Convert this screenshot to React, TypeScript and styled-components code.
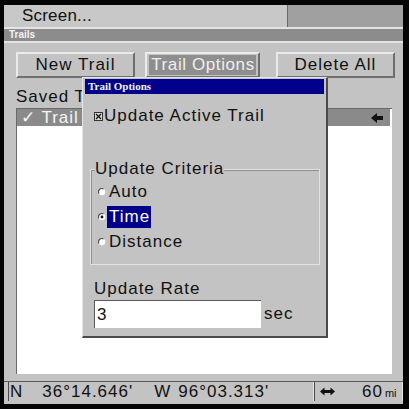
import styled, { createGlobalStyle } from "styled-components"

const Global = createGlobalStyle`
  body {
    margin: 0;
    background: #ffffff;
    font-family: "Liberation Sans", Arial, sans-serif;
  }
`

const Frame = styled.div`
  position: relative;
  width: 409px;
  height: 409px;
  box-sizing: border-box;
  border-style: solid;
  border-color: #050505;
  border-width: 5px 6px 5px 4px;
  background: #c3c3c3;
  display: flex;
  flex-direction: column;
  overflow: hidden;
  font-size: 17px;
  letter-spacing: 1px;
  color: #111;
  white-space: nowrap;
`

const MenuBar = styled.div`
  display: flex;
  height: 22px;
  flex-shrink: 0;
`

const MenuCell = styled.div<{ $dim?: boolean }>`
  flex: ${(p) => (p.$dim ? "1" : "0 0 265px")};
  background: ${(p) => (p.$dim ? "#a0a0a0" : "#c8c8c8")};
  border-left: ${(p) => (p.$dim ? "1px solid #6a6a6a" : "none")};
  line-height: 22px;
  letter-spacing: 0.2px;
  padding-left: ${(p) => (p.$dim ? "0" : "18px")};
`

const Rule = styled.div`
  height: 2px;
  background: #e4e4e4;
  flex-shrink: 0;
`

const TitleBar = styled.div<{ $blue?: boolean }>`
  height: ${(p) => (p.$blue ? "15px" : "12px")};
  flex-shrink: 0;
  background: ${(p) => (p.$blue ? "#00008a" : "#8c8c8c")};
  color: #f4f4f4;
  font-family: ${(p) =>
    p.$blue ? '"Liberation Serif", "Times New Roman", serif' : '"Liberation Sans", Arial, sans-serif'};
  font-weight: bold;
  font-size: ${(p) => (p.$blue ? "11px" : "10px")};
  letter-spacing: 0;
  line-height: ${(p) => (p.$blue ? "15px" : "12px")};
  padding-left: ${(p) => (p.$blue ? "3px" : "5px")};
`

const Panel = styled.div`
  flex: 1;
  display: flex;
  flex-direction: column;
  padding: 9px 7px 0 12px;
  min-height: 0;
`

const ButtonRow = styled.div`
  display: flex;
  height: 26px;
  flex-shrink: 0;
`

const Button = styled.div<{ $w: number; $gap: number }>`
  width: ${(p) => p.$w}px;
  margin-right: ${(p) => p.$gap}px;
  box-sizing: border-box;
  border-top: 2px solid #eaeaea;
  border-left: 2px solid #eaeaea;
  border-right: 2px solid #6e6e6e;
  border-bottom: 2px solid #6e6e6e;
  display: flex;
  align-items: center;
  justify-content: center;
`

const Focus = styled.span`
  background: #8e8e8e;
  color: #efefef;
  padding: 0 1px 0 2px;
  line-height: 20px;
  letter-spacing: 0.6px;
`

const Label = styled.div`
  line-height: 22px;
  margin-top: 8px;
`

const ListBox = styled.div`
  height: 266px;
  flex-shrink: 0;
  margin-right: 4px;
  background: #ffffff;
  border-left: 1px solid #6a6a6a;
  border-top: 1px solid #6a6a6a;
  box-sizing: border-box;
`

const ListRow = styled.div`
  height: 17px;
  margin-right: 2px;
  background: #8a8a8a;
  color: #f6f6f6;
  line-height: 17px;
  display: flex;
  align-items: center;
  justify-content: space-between;
  padding: 0 7px 0 4px;
`

const StatusBar = styled.div`
  margin: 7px -7px 0 -12px;
  height: 20px;
  flex-shrink: 0;
  border-top: 1px solid #5a5a5a;
  display: flex;
  box-sizing: border-box;
  padding-left: 4px;
`

const StatusCell = styled.div<{ $w?: number }>`
  ${(p) => (p.$w ? `flex: 0 0 ${p.$w}px;` : "flex: 1;")}
  border-left: 1px solid #4a4a4a;
  border-right: 1px solid #e8e8e8;
  display: flex;
  align-items: center;
  line-height: 19px;
`

const Pos = styled.span<{ $x: number }>`
  margin-left: ${(p) => p.$x}px;
  display: flex;
  align-items: center;
`

const Small = styled.span`
  font-size: 11px;
  letter-spacing: 0;
  margin: 3px 0 0 2px;
`

const Dialog = styled.div`
  position: absolute;
  left: 78px;
  top: 72px;
  width: 246px;
  height: 261px;
  box-sizing: border-box;
  background: #c3c3c3;
  border-top: 1px solid #e6e6e6;
  border-left: 1px solid #e6e6e6;
  border-right: 2px solid #4a4a4a;
  border-bottom: 2px solid #4a4a4a;
  padding: 1px 2px 0 2px;
  display: flex;
  flex-direction: column;
`

const DialogBody = styled.div`
  padding: 0 0 0 9px;
  display: flex;
  flex-direction: column;
`

const CheckRow = styled.div`
  display: flex;
  align-items: center;
  gap: 1px;
  margin-top: 12px;
`

const Group = styled.fieldset`
  margin: 33px 4px 0 -4px;
  padding: 0 0 6px 0;
  height: 106px;
  box-sizing: border-box;
  border: 1px solid #e2e2e2;
  box-shadow: inset 1px 1px 0 #8e8e8e;
  display: flex;
  flex-direction: column;
`

const Legend = styled.legend`
  padding: 0;
  margin-left: 4px;
  line-height: 20px;
  background: #c3c3c3;
`

const Radio = styled.div`
  display: flex;
  align-items: center;
  height: 25px;
  padding-left: 7px;
`

const Picked = styled.span<{ $on?: boolean }>`
  background: ${(p) => (p.$on ? "#00008a" : "transparent")};
  color: ${(p) => (p.$on ? "#ffffff" : "#111")};
  padding: 1px 1px 1px 2px;
  margin-left: 1px;
`

const RateLabel = styled.div`
  margin-top: 14px;
`

const InputRow = styled.div`
  display: flex;
  align-items: center;
  gap: 3px;
  margin-top: 1px;
`

const Input = styled.div`
  width: 167px;
  height: 28px;
  box-sizing: border-box;
  background: #ffffff;
  border-left: 1px solid #5a5a5a;
  border-top: 1px solid #5a5a5a;
  padding-left: 2px;
  line-height: 27px;
`

function CheckBox() {
  return (
    <svg width="9" height="9" viewBox="0 0 9 9">
      <rect x="0.5" y="0.5" width="8" height="8" fill="#d8d8d8" stroke="#333" />
      <path d="M2 2 L7 7 M7 2 L2 7" stroke="#111" strokeWidth="1.3" />
    </svg>
  )
}

function RadioDot({ on }: { on?: boolean }) {
  return (
    <svg width="8" height="8" viewBox="0 0 8 8">
      <circle cx="4" cy="4" r="3.3" fill="#ffffff" />
      <path d="M1 5.5 A3.3 3.3 0 0 1 5.5 1" stroke="#555" strokeWidth="1.2" fill="none" />
      {on && <circle cx="4" cy="4" r="1.4" fill="#111" />}
    </svg>
  )
}

function Arrow() {
  return (
    <svg width="12" height="10" viewBox="0 0 12 10">
      <path d="M0 5 L6 0 L6 3 L12 3 L12 7 L6 7 L6 10 Z" fill="#111" />
    </svg>
  )
}

function BothWays() {
  return (
    <svg width="15" height="9" viewBox="0 0 15 9">
      <path d="M0 4.5 L4.5 0.5 L4.5 3 L10.5 3 L10.5 0.5 L15 4.5 L10.5 8.5 L10.5 6 L4.5 6 L4.5 8.5 Z" fill="#111" />
    </svg>
  )
}

export default function App() {
  return (
    <>
      <Global />
      <Frame>
        <MenuBar>
          <MenuCell>Screen...</MenuCell>
          <MenuCell $dim />
        </MenuBar>
        <Rule />
        <TitleBar>Trails</TitleBar>
        <Rule />
        <Panel>
          <ButtonRow>
            <Button $w={119} $gap={10}>New Trail</Button>
            <Button $w={115} $gap={16}>
              <Focus>Trail Options</Focus>
            </Button>
            <Button $w={119} $gap={0}>Delete All</Button>
          </ButtonRow>
          <Label>Saved Trails</Label>
          <ListBox>
            <ListRow>
              <span>✓ Trail 1</span>
              <Arrow />
            </ListRow>
          </ListBox>
          <StatusBar>
            <StatusCell $w={304}>
              <Pos $x={1}>N</Pos>
              <Pos $x={19}>36°14.646'</Pos>
              <Pos $x={21}>W</Pos>
              <Pos $x={7}>96°03.313'</Pos>
            </StatusCell>
            <StatusCell>
              <Pos $x={5}>
                <BothWays />
              </Pos>
              <Pos $x={27}>60</Pos>
              <Small>mi</Small>
            </StatusCell>
          </StatusBar>
        </Panel>
        <Dialog>
          <TitleBar $blue>Trail Options</TitleBar>
          <DialogBody>
            <CheckRow>
              <CheckBox />
              <span>Update Active Trail</span>
            </CheckRow>
            <Group>
              <Legend>Update Criteria</Legend>
              <Radio>
                <RadioDot />
                <Picked>Auto</Picked>
              </Radio>
              <Radio>
                <RadioDot on />
                <Picked $on>Time</Picked>
              </Radio>
              <Radio>
                <RadioDot />
                <Picked>Distance</Picked>
              </Radio>
            </Group>
            <RateLabel>Update Rate</RateLabel>
            <InputRow>
              <Input>3</Input>
              <span>sec</span>
            </InputRow>
          </DialogBody>
        </Dialog>
      </Frame>
    </>
  )
}
